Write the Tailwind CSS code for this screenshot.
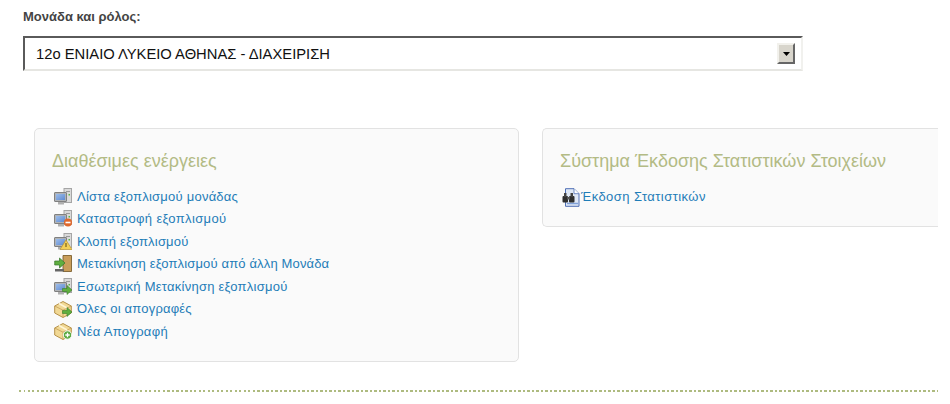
<!DOCTYPE html>
<html><head><meta charset="utf-8"><script src="https://cdn.jsdelivr.net/npm/@tailwindcss/browser@4"></script></head>
<body class="bg-white font-['Liberation_Sans',Arial,sans-serif] overflow-hidden">
<svg width="0" height="0" class="absolute">
<defs>
<linearGradient id="scr" x1="0" y1="0" x2="1" y2="1"><stop offset="0" stop-color="#9dbdea"/><stop offset="1" stop-color="#5f8ad0"/></linearGradient>
<g id="pc"><rect x="10" y=".5" width="7.500" height="14" fill="#dadada" stroke="#a5a5a5"/><rect x="12" y="3" width="4" height="1" fill="#9a9a9a"/><rect x="14.500" y="6" width="1.500" height="1.500" fill="#58b348"/><rect x=".5" y="4.500" width="12" height="9" rx=".5" fill="#b0b3b6" stroke="#808080"/><rect x="2" y="6" width="9" height="6" fill="url(#scr)"/><rect x="4" y="14" width="6" height="2.500" fill="#b0b0b0"/></g>
<g id="box"><path d="M.7 6 9 1.500 17.300 6v7L9 17.500.7 13z" fill="#f1d894" stroke="#b6924a" stroke-width="1"/><path d="M.7 6 9 10.200 17.300 6M9 10.200V17.500" fill="none" stroke="#c9a45c" stroke-width=".9"/><path d="M5 3.500l8 4.500" stroke="#fff5d6" stroke-width="1.600"/></g>
<g id="arrow"><path d="M8.500 10.500h4.500V7.500l5 4.500-5 4.500v-3H8.500z" fill="#5fae3f" stroke="#3a7d2b" stroke-width=".6"/></g>
</defs></svg>
<main class="w-[950px] h-[404px] pt-[9px]">
<div class="pl-[23px]">
<label class="block text-[13px] leading-[15px] font-bold text-[#444]">Μονάδα και ρόλος:</label>
<div class="mt-[12px] w-[780px] h-[35px] border-2 border-t-[#5a5a5a] border-l-[#5a5a5a] border-r-[#f1f1ee] border-b-[#e6e6e2] pl-[11px] pr-[6px] flex items-center justify-between text-[14.750px] text-[#111]">
<span class="pt-[1px]">12ο ΕΝΙΑΙΟ ΛΥΚΕΙΟ ΑΘΗΝΑΣ - ΔΙΑΧΕΙΡΙΣΗ</span>
<span class="w-[18px] h-[21px] bg-[#d8d5cc] border-2 border-t-[#f2f1ec] border-l-[#f2f1ec] border-r-[#666] border-b-[#666] flex items-center justify-center"><svg width="7" height="4"><path d="M0 0h7L3.500 4z" fill="#000"/></svg></span>
</div>
</div>
<div class="mt-[57px] ml-[34px] flex gap-[22px] items-start">
<section class="w-[485px] h-[234px] bg-[#fafafa] border border-[#e2e2e2] rounded-[5px] pl-[17px] pt-[21px] shrink-0">
<h2 class="text-[18px] leading-[22px] text-[#b3bb85]">Διαθέσιμες ενέργειες</h2>
<ul class="mt-[13px] ml-[2px] flex flex-col text-[13px] text-[#1f7db8]">
<li class="h-[22.500px] flex items-center gap-[5px] tracking-[.23px]"><svg width="18" height="17" viewBox="0 0 18 17"><use href="#pc"/></svg>Λίστα εξοπλισμού μονάδας</li>
<li class="h-[22.500px] flex items-center gap-[5px] tracking-[.35px]"><svg width="18" height="17" viewBox="0 0 18 17"><use href="#pc"/><circle cx="14" cy="12.500" r="4" fill="#e0672b"/><rect x="11.500" y="11.700" width="5" height="1.600" fill="#fff"/></svg>Καταστροφή εξοπλισμού</li>
<li class="h-[22.500px] flex items-center gap-[5px] tracking-[.2px]"><svg width="18" height="17" viewBox="0 0 18 17"><use href="#pc"/><path d="M12 7 18 16.500H6z" fill="#f2cf57" stroke="#b99430" stroke-width=".7"/><rect x="11.500" y="10" width="1" height="4" fill="#5c4a10"/></svg>Κλοπή εξοπλισμού</li>
<li class="h-[22.500px] flex items-center gap-[5px] tracking-[.15px]"><svg width="18" height="17" viewBox="0 0 18 17"><path d="M9 .5h8.500v16H9z" fill="#c99d5a" stroke="#7e6130" stroke-width=".9"/><rect x="1" y="14" width="9" height="2.500" fill="#666"/><path d="M.7 6h4.800V3l5.500 5-5.500 5v-3H.7z" fill="#5fae3f" stroke="#35722a" stroke-width=".7"/></svg>Μετακίνηση εξοπλισμού από άλλη Μονάδα</li>
<li class="h-[22.500px] flex items-center gap-[5px] tracking-[.25px]"><svg width="18" height="17" viewBox="0 0 18 17"><use href="#pc"/><use href="#arrow"/></svg>Εσωτερική Μετακίνηση εξοπλισμού</li>
<li class="h-[22.500px] flex items-center gap-[5px] tracking-[.2px]"><svg width="18" height="18" viewBox="0 0 18 18"><use href="#box"/><use href="#arrow"/></svg>Όλες οι απογραφές</li>
<li class="h-[22.500px] flex items-center gap-[5px] tracking-[.3px]"><svg width="18" height="18" viewBox="0 0 18 18"><use href="#box"/><circle cx="13.500" cy="13" r="4.200" fill="#5cab42" stroke="#fff" stroke-width=".9"/><path d="M11.300 13h4.400M13.500 10.800v4.400" stroke="#fff" stroke-width="1.300"/></svg>Νέα Απογραφή</li>
</ul>
</section>
<section class="w-[396px] h-[99px] ml-[1px] bg-[#fafafa] border border-r-0 border-[#e2e2e2] rounded-l-[5px] pl-[17px] pt-[21px] shrink-0">
<h2 class="text-[18px] leading-[22px] text-[#b3bb85]">Σύστημα Έκδοσης Στατιστικών Στοιχείων</h2>
<div class="mt-[14px] ml-[2px] h-[22px] flex items-center text-[13px] tracking-[.45px] text-[#1f7db8]"><svg width="18" height="19" viewBox="0 0 18 19"><path d="M3.500 .7h8.500l5 5v12.600H3.500z" fill="#dfe8f6" stroke="#4f6fb5"/><path d="M12 .7v5h5" fill="#fff" stroke="#4f6fb5" stroke-width=".8"/><path d="M5 15.500h11" stroke="#7fa0d8" stroke-width="1.500"/><rect x=".5" y="8" width="5.500" height="6.500" rx="1" fill="#2f2f2f"/><rect x="7" y="8" width="5.500" height="6.500" rx="1" fill="#2f2f2f"/><rect x="2" y="5" width="2.500" height="4" fill="#444"/><rect x="8.500" y="5" width="2.500" height="4" fill="#444"/><rect x="5" y="9" width="3" height="2.500" fill="#555"/></svg><span class="ml-[1px]">Έκδοση Στατιστικών</span></div>
</section>
</div>
<div class="mt-[28px] ml-[19px] w-[919px] h-[2px] bg-[repeating-linear-gradient(90deg,#aebb80_0,#aebb80_2px,transparent_2px,transparent_4.500px)]"></div>
</main>
</body></html>
